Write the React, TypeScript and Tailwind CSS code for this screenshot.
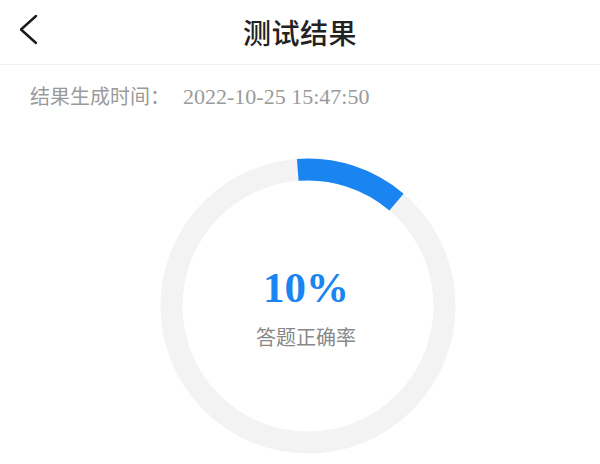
export default function App() {
  return (
    <div className="w-[600px] h-[464px] overflow-hidden bg-white font-['Noto_Sans_CJK_SC',sans-serif]">
      {/* header */}
      <div className="relative flex h-[65px] items-center justify-center border-b border-[#f0f0f0]">
        <button className="absolute left-[17px] top-[13px] p-0">
          <svg width="22" height="34" viewBox="0 0 22 34" fill="none">
            <path d="M19 3 L4 16.5 L19 30" stroke="#1a1a1a" strokeWidth="2.4" strokeLinecap="round" strokeLinejoin="round" />
          </svg>
        </button>
        <h1 className="text-[28px] font-medium leading-none text-[#222] tracking-[0.5px]">测试结果</h1>
      </div>

      <div className="pl-[30px] pt-[17px] text-[20px] leading-[28px] text-[#9a9a9a]">
        结果生成时间：<span className="ml-[13px] font-['Liberation_Serif',serif] text-[22px]">2022-10-25 15:47:50</span>
      </div>

      {/* ring */}
      <div className="flex justify-center pl-[16px] pt-[47px]">
        <div className="relative h-[296px] w-[296px]">
          <svg width="296" height="296" viewBox="0 0 296 296">
            <circle cx="148" cy="148" r="136.5" fill="none" stroke="#f3f3f3" strokeWidth="22" />
            <path d="M137.76 11.88 A136.5 136.5 0 0 1 236.47 44.05" fill="none" stroke="#1a84f0" strokeWidth="22" />
          </svg>
          <div className="absolute inset-0 flex flex-col items-center justify-center pr-[4px]">
            <div className="font-['Liberation_Serif',serif] text-[43px] font-bold leading-none text-[#1a84f0]">10%</div>
            <div className="mt-[18px] text-[20px] leading-none text-[#888]">答题正确率</div>
          </div>
        </div>
      </div>
    </div>
  )
}
